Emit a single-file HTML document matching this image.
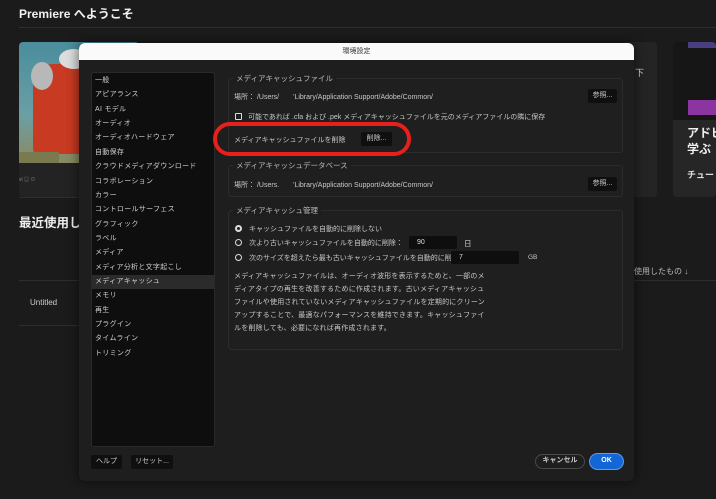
<!DOCTYPE html>
<html><head><meta charset="utf-8"><style>
*{margin:0;padding:0;box-sizing:border-box}
body{width:716px;height:499px;background:#1b1b1b;font-family:"Liberation Sans","Noto Sans CJK JP",sans-serif;color:#c8c8c8;position:relative;overflow:hidden;font-size:7px}
.a{position:absolute;white-space:nowrap}
.dlg{position:absolute;left:79px;top:43px;width:555px;height:438px;background:#1e1e1e;border-radius:6px;overflow:hidden;box-shadow:0 0 12px rgba(0,0,0,.6)}
.title{position:absolute;left:0;top:0;width:555px;height:17px;background:#fafafa;color:#333;text-align:center;font-size:7px;line-height:17px}
.list{position:absolute;left:12px;top:29px;width:124px;height:375px;background:#0e0e0e;border:1px solid #2a2a2a;border-radius:3px;padding-top:1px}
.list div{height:14.37px;line-height:14.37px;padding-left:3px;font-size:7px;color:#d0d0d0;letter-spacing:.3px}
.list .sel{background:#2b2b2b}
.grp{position:absolute;border:1px solid #2c2c2c;border-radius:3px;background:#1f1f1f}
.leg{position:absolute;background:#1e1e1e;padding:0 3px;font-size:7.5px;color:#bbb;top:-6px;left:4px}
.btn{position:absolute;background:#0f0f0f;border-radius:2px;color:#ccc;font-size:7px;text-align:center;line-height:14px;height:14px}
.rad{position:absolute;width:7px;height:7px;border:1.5px solid #ddd;border-radius:50%}
.inp{position:absolute;background:#0e0e0e;border-radius:2px;height:13px;font-size:7px;line-height:13px;padding-left:8px;color:#ddd}
.t{font-size:7px}
</style></head><body>
<div class="a" style="left:19px;top:5px;font-size:12px;font-weight:bold;color:#f0f0f0">Premiere へようこそ</div>
<div class="a" style="left:19px;top:27px;width:697px;height:1px;background:#2e2e2e"></div>
<div class="a" style="left:19px;top:42px;width:120px;height:155px;background:#232323;border-radius:4px;overflow:hidden">
 <div style="position:absolute;left:0;top:0;width:120px;height:121px;background:linear-gradient(#4a8d9c,#6a9fa5 60%,#8a8a60)"></div>
 <div style="position:absolute;left:14px;top:22px;width:60px;height:90px;background:#c83a22;border-radius:20px 20px 5px 5px"></div>
 <div style="position:absolute;left:12px;top:20px;width:22px;height:28px;background:#b8b8b8;border-radius:50%"></div>
 <div style="position:absolute;left:40px;top:7px;width:30px;height:20px;background:#ddd;border-radius:50%"></div>
 <div style="position:absolute;left:0;top:110px;width:40px;height:11px;background:#7a7a50"></div>
</div>
<div class="a" style="left:19px;top:176px;font-size:5px;color:#888">vi ▤ ⊙</div>
<div class="a" style="left:19px;top:197px;width:60px;height:1px;background:#2e2e2e"></div>
<div class="a" style="left:620px;top:42px;width:37px;height:155px;background:#242424;border-radius:4px"></div>
<div class="a" style="left:635px;top:66px;font-size:9px;color:#ddd">下</div>
<div class="a" style="left:673px;top:42px;width:43px;height:155px;background:#262626;border-radius:4px;overflow:hidden">
 <div style="position:absolute;left:0;top:0;width:43px;height:78px;background:#161616"></div>
 <div style="position:absolute;left:15px;top:58px;width:28px;height:15px;background:#8a35a0"></div>
 <div style="position:absolute;left:15px;top:0;width:28px;height:6px;background:#4a3d80"></div>
 <div style="position:absolute;left:14px;top:83px;font-size:12px;font-weight:bold;color:#eee;line-height:16px;white-space:nowrap">アドビ<br>学ぶ</div>
 <div style="position:absolute;left:14px;top:126px;font-size:9px;font-weight:bold;color:#ddd;white-space:nowrap">チュート</div>
</div>
<div class="a" style="left:19px;top:212px;font-size:12.5px;font-weight:bold;color:#eee">最近使用した</div>
<div class="a" style="left:19px;top:280px;width:60px;height:1px;background:#2e2e2e"></div>
<div class="a" style="left:30px;top:298px;font-size:8px;color:#ccc">Untitled</div>
<div class="a" style="left:19px;top:325px;width:60px;height:1px;background:#2e2e2e"></div>
<div class="a" style="left:634px;top:266px;font-size:8px;color:#bbb">使用したもの ↓</div>
<div class="a" style="left:634px;top:280px;width:82px;height:1px;background:#2e2e2e"></div>

<div class="dlg">
 <div class="title">環境設定</div>
 <div class="list">
  <div>一般</div><div>アピアランス</div><div>AI モデル</div><div>オーディオ</div><div>オーディオハードウェア</div><div>自動保存</div><div>クラウドメディアダウンロード</div><div>コラボレーション</div><div>カラー</div><div>コントロールサーフェス</div><div>グラフィック</div><div>ラベル</div><div>メディア</div><div>メディア分析と文字起こし</div><div class="sel">メディアキャッシュ</div><div>メモリ</div><div>再生</div><div>プラグイン</div><div>タイムライン</div><div>トリミング</div>
 </div>
 <div class="btn" style="left:12px;top:412px;width:31px">ヘルプ</div>
 <div class="btn" style="left:52px;top:412px;width:42px">リセット...</div>

 <div class="grp" style="left:149px;top:35px;width:395px;height:75px">
  <div class="leg">メディアキャッシュファイル</div>
  <div class="a" style="left:5px;top:13px;font-size:7px">場所： /Users/　　'Library/Application Support/Adobe/Common/</div>
  <div class="btn" style="left:359px;top:10px;width:29px">参照...</div>
  <div class="a" style="left:6px;top:34px;width:7px;height:7px;border:1.5px solid #ddd;border-radius:1px"></div>
  <div class="a" style="left:19px;top:33px;font-size:7px">可能であれば .cfa および .pek メディアキャッシュファイルを元のメディアファイルの隣に保存</div>
  <div class="a t" style="left:5px;top:56px">メディアキャッシュファイルを削除</div>
  <div class="btn" style="left:132px;top:53px;width:31px">削除...</div>
 </div>
 <div class="grp" style="left:149px;top:122px;width:395px;height:32px">
  <div class="leg">メディアキャッシュデータベース</div>
  <div class="a" style="left:5px;top:14px;font-size:7px">場所： /Users.　　'Library/Application Support/Adobe/Common/</div>
  <div class="btn" style="left:359px;top:11px;width:29px">参照...</div>
 </div>
 <div class="grp" style="left:149px;top:167px;width:395px;height:140px">
  <div class="leg">メディアキャッシュ管理</div>
  <div class="rad" style="left:6px;top:14px;border-width:2.5px"></div>
  <div class="a t" style="left:20px;top:13px">キャッシュファイルを自動的に削除しない</div>
  <div class="rad" style="left:6px;top:28px"></div>
  <div class="a t" style="left:20px;top:27px">次より古いキャッシュファイルを自動的に削除：</div>
  <div class="inp" style="left:180px;top:25px;width:48px">90</div>
  <div class="a" style="left:235px;top:27px;font-size:7.5px">日</div>
  <div class="rad" style="left:6px;top:43px"></div>
  <div class="a t" style="left:20px;top:42px">次のサイズを超えたら最も古いキャッシュファイルを自動的に削除：</div>
  <div class="inp" style="left:222px;top:40px;width:68px">7</div>
  <div class="a" style="left:299px;top:43px;font-size:6.5px">GB</div>
  <div class="a" style="left:5px;top:59px;font-size:7px;letter-spacing:.2px;line-height:13px;white-space:normal;width:257px">メディアキャッシュファイルは、オーディオ波形を表示するためと、一部のメディアタイプの再生を改善するために作成されます。古いメディアキャッシュファイルや使用されていないメディアキャッシュファイルを定期的にクリーンアップすることで、最適なパフォーマンスを維持できます。キャッシュファイルを削除しても、必要になれば再作成されます。</div>
 </div>
 <div class="a" style="left:456px;top:411px;width:50px;height:15px;border:1.5px solid #4a4a4a;border-radius:8px;font-size:7px;font-weight:bold;text-align:center;line-height:12px;color:#ccc">キャンセル</div>
 <div class="a" style="left:510px;top:410px;width:35px;height:17px;background:#1366d6;border:1.5px solid #5a9af0;border-radius:9px;font-size:7px;font-weight:bold;text-align:center;line-height:14px;color:#fff">OK</div>
</div>
<div class="a" style="left:213px;top:122px;width:198px;height:34px;border:4px solid #e8201c;border-radius:17px"></div>
</body></html>
